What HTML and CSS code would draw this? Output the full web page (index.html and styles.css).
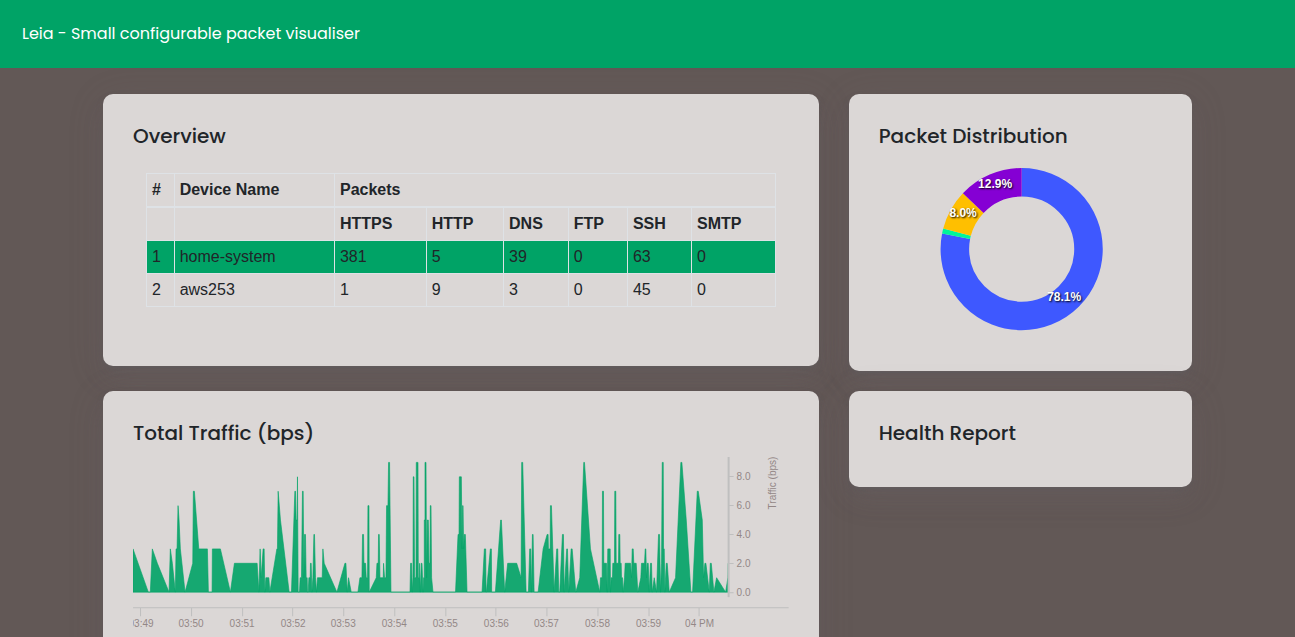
FILE: index.html
```html
<!DOCTYPE html>
<html lang="en">
<head>
<meta charset="utf-8">
<meta name="viewport" content="width=device-width, initial-scale=1">
<title>Leia</title>
<link rel="stylesheet" href="styles.css">
</head>
<body>
<header class="topbar">Leia - Small configurable packet visualiser</header>
<main class="dashboard">
  <section class="card">
    <h2 class="card-title">Overview</h2>
    <div class="table-wrap">
      <table class="packets">
        <colgroup><col class="c-index"><col class="c-name"><col class="c-https"><col class="c-http"><col class="c-dns"><col class="c-ftp"><col class="c-ssh"><col class="c-smtp"></colgroup>
        <thead>
          <tr><th>#</th><th>Device Name</th><th colspan="6">Packets</th></tr>
        </thead>
        <tbody>
          <tr><th></th><th></th><th>HTTPS</th><th>HTTP</th><th>DNS</th><th>FTP</th><th>SSH</th><th>SMTP</th></tr>
          <tr class="active"><td>1</td><td>home-system</td><td>381</td><td>5</td><td>39</td><td>0</td><td>63</td><td>0</td></tr>
          <tr><td>2</td><td>aws253</td><td>1</td><td>9</td><td>3</td><td>0</td><td>45</td><td>0</td></tr>
        </tbody>
      </table>
    </div>
  </section>

  <section class="card">
    <h2 class="card-title">Packet Distribution</h2>
    <svg class="chart donut" viewBox="0 0 283 181" role="img" aria-label="Packet distribution">
      <g class="slices" transform="rotate(-90 142.5 89)">
        <circle class="s-blue" cx="142.5" cy="89" r="66.75" pathLength="100" stroke-dasharray="78.1 100"/>
        <circle class="s-mint" cx="142.5" cy="89" r="66.75" pathLength="100" stroke-dasharray="1 100" stroke-dashoffset="-78.1"/>
        <circle class="s-amber" cx="142.5" cy="89" r="66.75" pathLength="100" stroke-dasharray="8 100" stroke-dashoffset="-79.1"/>
        <circle class="s-violet" cx="142.5" cy="89" r="66.75" pathLength="100" stroke-dasharray="12.9 100" stroke-dashoffset="-87.1"/>
      </g>
      <g class="slice-labels">
        <text x="116" y="28">12.9%</text>
        <text x="84" y="57">8.0%</text>
        <text x="185" y="141">78.1%</text>
      </g>
    </svg>
  </section>

  <section class="card">
    <h2 class="card-title">Total Traffic (bps)</h2>
    <svg class="chart traffic" viewBox="0 0 655 185" role="img" aria-label="Total traffic in bits per second">
      <g transform="translate(0 135) scale(1 -14.4)">
        <polygon class="area" points="0,0 0,3 15.3,0 17.3,0 19.3,3 24.3,2 36,0 37.3,3 39.3,2 42.3,0 43,3 44,3 45,6 46,5 47.3,3 52,0 59.7,2 60.3,7 61.3,7 65.7,3 74.3,3 75.3,0 79,0 79.3,3 87.3,3 97.3,0 101.3,2 124,2 125.7,0 127,3 128,1 130,3 131,3 131.7,0 132.7,1 135.7,1 136.7,0 143.7,3 144.3,3 145,7 147.3,5 156,0 158.3,0 161.7,7 162.3,7 163,5 164,5 164.3,8 165,0 166.3,0 167,1 168.3,1 169.3,7 170,7 170.7,1 171.3,4 172.3,4 173,1 174,1 174.3,0 175,0 175.7,1 177,1 177.3,2 178,2 178.7,0 179.7,1 180.7,4 181.3,4 182.3,1 183.3,0 184.3,1 189,1 189.7,3 191,2 203.7,0 211.7,2 212.7,2 214,0 215.3,1 218,0 224.7,0 226.7,1 228.7,1 229.3,4 230.3,4 230.7,2 232.3,2 233,1 234.3,1 234.7,6 235.7,6 236,0 243,1 243.7,2 245,2 245.3,4 246,4 246.7,1 250,1 250.3,2 251.3,1 252.7,1 253.3,6 254.7,6 255.3,9 256.3,9 257.7,0 276.7,0 277.3,2 278.3,2 279,0 279.7,1 280,8 280.7,8 281.3,1 282.7,1 283,9 284.7,9 285,1 286,1 286.3,2 287,0 288,2 288.7,2 289.7,0 290.3,1 291,1 291,5 291.7,5 291.7,9 292.7,9 293.3,1 294,5 295,5 295.7,2 296.7,2 297,6 297.7,6 298.3,1 299.7,0 322.2,0 324.7,4 325.7,4 326,8 328,8 328.7,3 329.3,6 329.7,6 330.3,3 331,4 332,4 333.7,0 348.7,0 351,3 352.3,3 352.7,0 353,0 357,3 358,3 358.3,0 362,0 367.3,5 368,5 371.3,0 374.3,2 383.3,2 387.7,1 388.3,9 389.3,9 392.7,0 395,0 396.3,3 397.3,3 398,0 399,4 399.7,4 400.7,0 404.7,0 409.7,3 413.7,4 414.7,4 415,3 416.7,3 417,6 418,6 420.7,0 423.3,3 424.3,3 425.3,0 426.3,0 429,4 430,4 430.7,0 433.3,3 434,3 435.3,0 437.7,3 438.7,3 442.3,0 446.3,1 450.3,9 451,9 457,3 466.3,0 467,1 468.7,1 469,7 470,7 470.3,2 473,2 473.7,0 474.3,3 476.7,3 477,0 477.7,1 479,1 479.3,2 481,2 481.3,7 482.3,7 482.7,2 485,2 485.3,4 486.3,4 486.7,2 487.7,2 488,1 489,1 489.7,0 491,1 491.7,2 497,2 498,1 498.7,3 499.7,3 500.3,2 502.7,2 504.3,0 507.3,1 508,2 511,2 511.7,3 512.3,3 513,1 513.7,2 514.7,2 515.7,0 517,2 518,2 518.7,0 520.7,1 523,0 525,4 526,4 527,0 528,2 528.7,9 529.7,9 530,3 530.7,3 531.3,0 532.7,2 533.7,2 535.7,0 542,1 547.3,9 548.3,9 552.7,5 557.3,0 559,0 563.7,7 564.7,7 568.7,5 570,1 571.3,2 572.3,2 575.7,0 576.7,2 577.7,2 580.3,0 583,1 592,0 594.3,1 594.7,2 595,0"/>
      </g>
      <path class="axis axis-y" d="M595 0V140"/>
      <path class="axis" d="M595 19.5h5M595 48.5h5M595 77.5h5M595 106.5h5M595 135.5h5"/>
      <path class="axis" d="M0 150.5H655M7.5 151v8M58.5 151v8M109.5 151v8M159.5 151v8M210.5 151v8M261.5 151v8M312.5 151v8M362.5 151v8M413.5 151v8M464.5 151v8M515.5 151v8M565.5 151v8"/>
      <g class="ticks">
        <text x="603" y="23">8.0</text><text x="603" y="52">6.0</text><text x="603" y="81">4.0</text><text x="603" y="110">2.0</text><text x="603" y="139">0.0</text>
      </g>
      <g class="ticks ticks-x">
        <text x="8" y="170">03:49</text><text x="58" y="170">03:50</text><text x="109" y="170">03:51</text><text x="160" y="170">03:52</text><text x="210" y="170">03:53</text><text x="261" y="170">03:54</text><text x="312" y="170">03:55</text><text x="363" y="170">03:56</text><text x="413" y="170">03:57</text><text x="464" y="170">03:58</text><text x="515" y="170">03:59</text><text x="566" y="170">04 PM</text>
        <text transform="translate(642 26) rotate(-90)">Traffic (bps)</text>
      </g>
    </svg>
  </section>

  <section class="card">
    <h2 class="card-title">Health Report</h2>
  </section>
</main>
</body>
</html>
```

FILE: styles.css
```css
* { box-sizing: border-box; }

body {
  margin: 0;
  background: #625856;
  color: #212529;
  font: 16px/24px "Liberation Sans", Arial, sans-serif;
}

.topbar {
  padding: 22px;
  background: #00a366;
  color: #fff;
  font-family: Poppins, Inter, sans-serif;
  font-size: 16px;
}

.dashboard {
  display: grid;
  grid-template-columns: 715fr 343fr;
  gap: 20px 30px;
  align-items: start;
  max-width: 1119px;
  margin: 0 auto;
  padding: 26px 15px;
}

.card {
  padding: 30px;
  border-radius: 10px;
  background: #dbd7d6;
  box-shadow:
    0 7px 35px rgba(125, 108, 115, 0.2),
    0 15px 22px rgba(100, 100, 108, 0.1),
    0 4px 9px rgba(90, 97, 105, 0.12),
    0 2px 3px rgba(90, 97, 105, 0.1);
}

.card-title {
  margin: 0 0 12px;
  font-family: Poppins, Inter, sans-serif;
  font-size: 20px;
  font-weight: 500;
  line-height: 24px;
}

.table-wrap { padding: 13px 13px 29px; }

.packets {
  width: 100%;
  table-layout: fixed;
  border-collapse: collapse;
  border: 1px solid #dee2e6;
}
.packets th,
.packets td {
  height: 33px;
  padding: 4px 5px;
  border: 1px solid #dee2e6;
  text-align: left;
}
.packets thead th { border-bottom-width: 2px; }
.packets .active { background: #00a366; }

.c-index { width: 4.4%; }
.c-name { width: 25.5%; }
.c-https { width: 14.6%; }
.c-http { width: 12.3%; }
.c-dns { width: 10.3%; }
.c-ftp { width: 9.4%; }
.c-ssh { width: 10.2%; }
.c-smtp { width: 13.3%; }

.chart {
  display: block;
  width: 100%;
}

.slices circle { fill: none; stroke-width: 28.5; }
.s-blue { stroke: #3e58ff; }
.s-mint { stroke: #00f59b; }
.s-amber { stroke: #ffbf00; }
.s-violet { stroke: #8500d4; }
.slice-labels {
  fill: #fff;
  font-size: 12px;
  font-weight: 700;
  text-anchor: middle;
  text-shadow: 1px 1px 2px #000;
}

.area {
  fill: #00a366;
  fill-opacity: 0.9;
  stroke: #00a366;
  stroke-opacity: 0.6;
  vector-effect: non-scaling-stroke;
}
.axis { fill: none; stroke: #bfbfbf; }
.axis-y { stroke-width: 2; }
.ticks { fill: #938786; font-size: 10px; }
.ticks-x { text-anchor: middle; }
```
